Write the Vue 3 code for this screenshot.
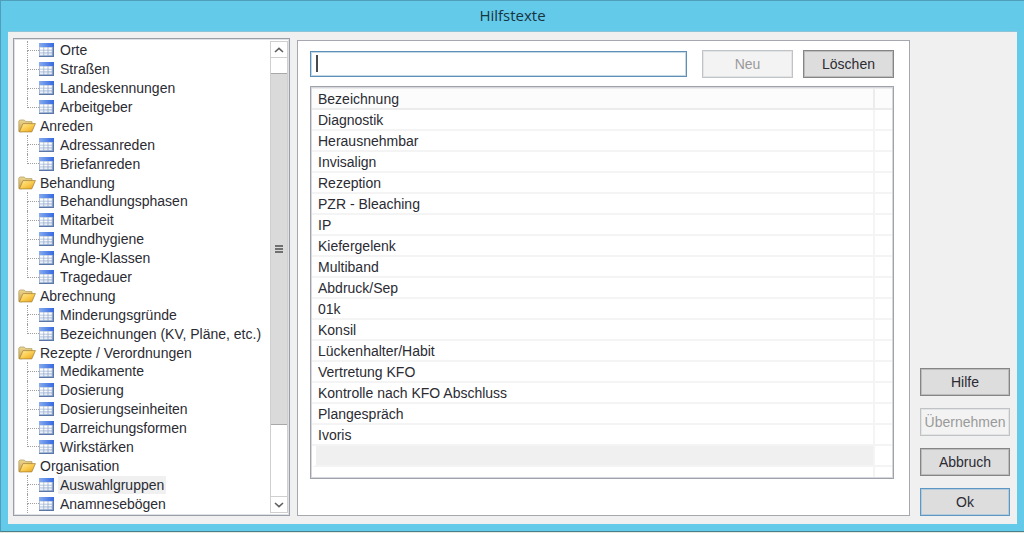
<script setup>
import { ref } from 'vue'

const groups = [
  { name: '', items: ['Orte', 'Straßen', 'Landeskennungen', 'Arbeitgeber'] },
  { name: 'Anreden', items: ['Adressanreden', 'Briefanreden'] },
  { name: 'Behandlung', items: ['Behandlungsphasen', 'Mitarbeit', 'Mundhygiene', 'Angle-Klassen', 'Tragedauer'] },
  { name: 'Abrechnung', items: ['Minderungsgründe', 'Bezeichnungen (KV, Pläne, etc.)'] },
  { name: 'Rezepte / Verordnungen', items: ['Medikamente', 'Dosierung', 'Dosierungseinheiten', 'Darreichungsformen', 'Wirkstärken'] },
  { name: 'Organisation', items: ['Auswahlgruppen', 'Anamnesebögen'], more: true },
]

const rows = groups.flatMap((g) => [
  ...(g.name ? [{ label: g.name, folder: true }] : []),
  ...g.items.map((label, i) => ({ label, last: !g.more && i === g.items.length - 1 })),
])

const selected = ref('Auswahlgruppen')
const term = ref('')

const entries = [
  'Diagnostik', 'Herausnehmbar', 'Invisalign', 'Rezeption', 'PZR - Bleaching', 'IP',
  'Kiefergelenk', 'Multiband', 'Abdruck/Sep', '01k', 'Konsil', 'Lückenhalter/Habit',
  'Vertretung KFO', 'Kontrolle nach KFO Abschluss', 'Plangespräch', 'Ivoris',
]
</script>

<template>
  <div class="window">
    <svg class="defs" width="0" height="0" aria-hidden="true">
      <defs>
        <linearGradient id="head" x1="0" x2="1" y1="0" y2="0">
          <stop offset="0" stop-color="#86acf0" />
          <stop offset="1" stop-color="#3569e0" />
        </linearGradient>
        <linearGradient id="gridbg" x1="0" x2="1" y1="0" y2="1">
          <stop offset="0" stop-color="#b9c8e0" />
          <stop offset="1" stop-color="#7c98c4" />
        </linearGradient>
        <linearGradient id="flap" x1="0" x2="1" y1="0" y2="1">
          <stop offset="0" stop-color="#ffeaa0" />
          <stop offset="0.5" stop-color="#fbcd50" />
          <stop offset="1" stop-color="#e59f1c" />
        </linearGradient>
        <linearGradient id="back" x1="0" x2="0" y1="0" y2="1">
          <stop offset="0" stop-color="#ecd793" />
          <stop offset="1" stop-color="#c9a24a" />
        </linearGradient>
      </defs>
    </svg>
    <header class="titlebar"><h1>Hilfstexte</h1></header>
    <main class="client">
      <nav class="tree" aria-label="Kategorien">
        <ul class="nodes">
          <li v-for="r in rows" :key="r.label" class="node" :class="{ folder: r.folder, last: r.last }">
            <svg v-if="r.folder" class="ficon" viewBox="0 0 18 14" aria-hidden="true">
              <path d="M.8 12.5V2.2L1.8 1H6.3L7.6 2.6H14V5L3.5 12.8Z" fill="url(#back)" stroke="#b39a60" stroke-width=".7" />
              <path d="M5 4.6H17.4L13.8 12.9H1.4Z" fill="url(#flap)" stroke="#a07c32" stroke-width=".7" />
            </svg>
            <template v-else>
              <span class="link"><i class="upper"></i><i class="lower"></i></span>
              <svg class="ticon" viewBox="0 0 15 14" aria-hidden="true">
                <rect width="15" height="14" fill="url(#gridbg)" />
                <rect width="15" height="4" fill="url(#head)" />
                <g fill="#fff">
                  <path d="M1 4.5h3.4v2.2H1zM5.2 4.5h3.4v2.2H5.2zM9.4 4.5h3.4v2.2H9.4z" />
                  <path d="M1 7.4h3.4v2.2H1zM5.2 7.4h3.4v2.2H5.2zM9.4 7.4h3.4v2.2H9.4z" opacity=".92" />
                  <path d="M1 10.3h3.4v2H1zM5.2 10.3h3.4v2H5.2zM9.4 10.3h3.4v2H9.4z" opacity=".8" />
                </g>
                <path d="M0 13.5h15M14.5 4v10" stroke="#5a77a8" fill="none" />
              </svg>
            </template>
            <button type="button" class="label" :class="{ sel: selected === r.label }" @click="selected = r.label">{{ r.label }}</button>
          </li>
        </ul>
        <div class="scroll">
          <button type="button" class="arrow up" aria-label="Nach oben">
            <svg viewBox="0 0 10 6" aria-hidden="true"><path d="M1 5L5 1.4L9 5" /></svg>
          </button>
          <div class="track">
            <div class="thumb"><i></i><i></i><i></i></div>
          </div>
          <button type="button" class="arrow down" aria-label="Nach unten">
            <svg viewBox="0 0 10 6" aria-hidden="true"><path d="M1 1L5 4.6L9 1" /></svg>
          </button>
        </div>
      </nav>

      <section class="panel">
        <div class="bar">
          <div class="field">
            <input v-model="term" type="text" aria-label="Bezeichnung" />
            <span v-if="!term" class="caret"></span>
          </div>
          <button type="button" class="btn" disabled>Neu</button>
          <button type="button" class="btn">Löschen</button>
        </div>
        <div class="list">
          <table>
            <thead>
              <tr><th scope="col">Bezeichnung</th><th class="rest"></th></tr>
            </thead>
            <tbody>
              <tr v-for="e in entries" :key="e"><td>{{ e }}</td><td></td></tr>
              <tr class="current"><td></td><td></td></tr>
            </tbody>
          </table>
          <div class="filler"></div>
        </div>
      </section>

      <aside class="actions">
        <button type="button" class="btn">Hilfe</button>
        <button type="button" class="btn" disabled>Übernehmen</button>
        <button type="button" class="btn">Abbruch</button>
        <button type="button" class="btn default">Ok</button>
      </aside>
    </main>
  </div>
</template>

<style>
html {
  background: #e9e8da;
}
body {
  margin: 0;
}
</style>

<style scoped>
* {
  box-sizing: border-box;
}
.window {
  display: flex;
  flex-direction: column;
  min-height: calc(100vh - 1px);
  padding: 0 7px 7px;
  background: #64cae9;
  border: 1px solid #4f9fba;
  border-right: 0;
  border-bottom-color: #477f8c;
  font-family: "Liberation Sans", Arial, sans-serif;
  font-size: 14px;
  color: #2b2b33;
}
.defs {
  position: absolute;
}
.titlebar {
  height: 30px;
  padding-bottom: 2px;
  display: flex;
  align-items: center;
  justify-content: center;
}
h1 {
  margin: 0;
  font: 400 15px/20px "Open Sans", "Noto Sans", sans-serif;
  color: #173541;
}
.client {
  flex: 1;
  display: flex;
  gap: 7px;
  padding: 6px 7px 8px 5px;
  background: #f0f0f0;
  border-top: 1px solid #8cc4da;
}
.tree {
  flex: 0 0 277px;
  display: flex;
  padding: 1px;
  background: #fff;
  border: 1px solid #9a9ea8;
  outline: 1px solid #dfe1e5;
  outline-offset: -2px;
}
.nodes {
  flex: 1;
  display: grid;
  grid-auto-rows: 1fr;
  margin: 0;
  padding: 1px 0 1px 12px;
  list-style: none;
}
.node {
  display: flex;
  align-items: center;
  min-height: 18px;
}
.folder {
  margin-left: -9px;
}
.ficon {
  width: 18px;
  height: 14px;
  margin-right: 2px;
}
.ticon {
  width: 15px;
  height: 14px;
  margin-right: 4px;
}
.link {
  align-self: stretch;
  display: flex;
  flex-direction: column;
  width: 12px;
}
.link i {
  flex: 1;
  border-left: 1px dotted #a0a0a0;
}
.link .upper {
  border-bottom: 1px dotted #a0a0a0;
}
.last .lower {
  border-color: transparent;
}
.label {
  padding: 0 2px;
  border: 0;
  background: none;
  font: inherit;
  line-height: 18px;
  color: inherit;
  text-align: left;
  white-space: nowrap;
}
.label.sel {
  background: #f0f0f0;
}
.scroll {
  display: flex;
  flex-direction: column;
  width: 18px;
  margin: 1px 0;
  border: 1px solid #cfcfcf;
}
.arrow {
  display: flex;
  align-items: center;
  justify-content: center;
  height: 16px;
  padding: 0;
  border: 0 solid #cfcfcf;
  background: #fff;
}
.up {
  border-bottom-width: 1px;
}
.down {
  border-top-width: 1px;
}
.arrow svg {
  width: 10px;
  height: 6px;
  fill: none;
  stroke: #606060;
  stroke-width: 1.6;
}
.track {
  flex: 1;
  display: grid;
  grid-template-rows: 15fr 354fr 71fr;
  background: #fff;
}
.thumb {
  grid-row: 2;
  display: flex;
  flex-direction: column;
  align-items: center;
  justify-content: center;
  gap: 1px;
  background: #dadada;
  border: solid #a8a8a8;
  border-width: 1px 0;
}
.thumb i {
  width: 8px;
  height: 2px;
  background: #707070;
}
.panel {
  flex: 1;
  display: flex;
  flex-direction: column;
  gap: 8px;
  margin-top: 2px;
  padding: 9px 15px 36px 12px;
  background: #fff;
  border: 1px solid #a6a8b0;
}
.bar {
  display: flex;
  align-items: center;
  gap: 10px;
}
.field {
  position: relative;
  flex: 1;
  display: flex;
  margin-right: 5px;
}
.field input {
  flex: 1;
  min-width: 0;
  height: 26px;
  padding: 0 5px;
  border: 1px solid #5f8fb6;
  outline: 1px solid #c5d8e6;
  outline-offset: -2px;
  background: #fff;
  font: inherit;
}
.caret {
  position: absolute;
  left: 6px;
  top: 4px;
  width: 2px;
  height: 17px;
  background: #4a4a4a;
}
.btn {
  width: 91px;
  height: 28px;
  padding: 0;
  border: 1px solid #858585;
  outline: 1px solid #bcbcbc;
  outline-offset: -2px;
  background: #dddddd;
  font: inherit;
  color: #2b2b33;
}
.btn:disabled {
  border-color: #bfc3c5;
  outline-color: #e2e4e5;
  background: #f3f3f3;
  color: #9a9a9a;
}
.btn.default {
  border-color: #5f97c4;
  outline-color: #b4cbdc;
}
.list {
  flex: 1;
  display: flex;
  flex-direction: column;
  padding: 1px;
  border: 1px solid #9fa2ab;
  outline: 1px solid #d6d8dc;
  outline-offset: -2px;
}
table {
  width: 100%;
  border-collapse: separate;
  border-spacing: 0;
  table-layout: fixed;
}
th,
td {
  height: 21px;
  padding: 0 0 0 6px;
  border-bottom: 2px solid #f4f4f4;
  border-right: 2px solid #f4f4f4;
  font-weight: 400;
  line-height: 18px;
  text-align: left;
}
th {
  height: 22px;
  background: #fcfcfc;
  border-top: 1px solid #f0f0f0;
  border-color: #ececec;
}
.rest {
  width: 17px;
}
th:last-child,
td:last-child {
  border-right: 0;
}
.current td:first-child {
  background: #f0f0f0;
  border-left: 4px solid #fff;
}
.filler {
  flex: 1;
  margin-right: 17px;
  border-right: 2px solid #f4f4f4;
}
.actions {
  display: flex;
  flex-direction: column;
  justify-content: flex-end;
  gap: 12px;
  margin-left: 3px;
}
.actions .btn {
  width: 90px;
}
</style>
